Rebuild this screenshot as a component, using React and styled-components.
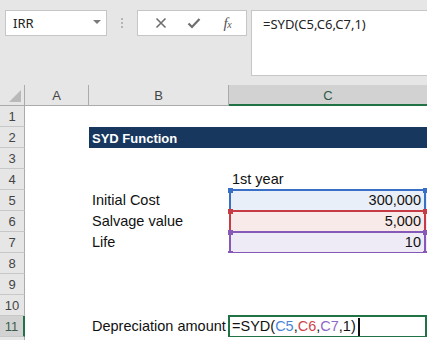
import React from "react";
import styled, { createGlobalStyle, css } from "styled-components";

const Global = createGlobalStyle`
  html, body { margin: 0; padding: 0; background: #fff; overflow: hidden; }
  * { box-sizing: border-box; }
`;

const UI = `"Noto Sans", "Open Sans", "Liberation Sans", sans-serif`;
const CELL = `"Liberation Sans", Arial, sans-serif`;

const Page = styled.div`
  width: 427px;
  height: 340px;
  overflow: hidden;
  font-family: ${CELL};
`;

const Toolbar = styled.div`
  height: 85px;
  background: #e6e6e6;
  display: flex;
  align-items: flex-start;
  padding: 10px 0 0 5px;
`;

const NameBox = styled.div`
  width: 102px;
  height: 26px;
  background: #fff;
  border: 1px solid #c6c6c6;
  display: flex;
  align-items: center;
  justify-content: space-between;
  padding: 0 5px 0 7px;
  font-family: ${UI};
  font-size: 13px;
  color: #222;
`;

const Caret = styled.span`
  width: 0;
  height: 0;
  border-left: 4px solid transparent;
  border-right: 4px solid transparent;
  border-top: 4px solid #7a7a7a;
  margin-top: -2px;
`;

const DotsWrap = styled.div`
  width: 30px;
  height: 26px;
  display: flex;
  flex-direction: column;
  align-items: center;
  justify-content: center;
  gap: 2px;
`;

const Dot = styled.span`
  width: 2px;
  height: 2px;
  background: #b5b5b5;
`;

const FxButtons = styled.div`
  width: 110px;
  height: 26px;
  background: #fff;
  border: 1px solid #c6c6c6;
  display: flex;
  align-items: center;
  justify-content: space-around;
  padding: 0 2px 0 6px;
`;

const IconBtn = styled.span`
  width: 24px;
  display: flex;
  justify-content: center;
  align-items: center;
  color: #707070;
`;

const FxText = styled.span`
  font-family: "Liberation Serif", "DejaVu Serif", serif;
  font-style: italic;
  font-size: 15px;
  color: #555;
  letter-spacing: -0.5px;
  & sub {
    font-size: 10px;
    vertical-align: baseline;
  }
`;

const FormulaBar = styled.div`
  flex: 1;
  margin-left: 4px;
  height: 66px;
  background: #fff;
  border: 1px solid #c6c6c6;
  border-right: none;
  padding: 4px 0 0 11px;
  font-family: ${UI};
  font-size: 13px;
  color: #222;
`;

const Sheet = styled.div`
  display: grid;
  grid-template-columns: 25px 64px 140px 198px;
  grid-template-rows: 21px repeat(12, 21px);
`;

const Corner = styled.div`
  background: #e6e6e6;
  border-right: 1px solid #ababab;
  border-bottom: 1px solid #ababab;
  position: relative;
  &::after {
    content: "";
    position: absolute;
    right: 3px;
    bottom: 3px;
    width: 0;
    height: 0;
    border-left: 12px solid transparent;
    border-bottom: 12px solid #b9b9b9;
  }
`;

const ColHead = styled.div`
  background: ${(p) => (p.$active ? "#d2d2d2" : "#e6e6e6")};
  border-right: 1px solid #ababab;
  border-bottom: ${(p) => (p.$active ? "2px solid #217346" : "1px solid #ababab")};
  display: flex;
  align-items: center;
  justify-content: center;
  font-family: ${CELL};
  font-size: 13px;
  color: ${(p) => (p.$active ? "#2e5b47" : "#444")};
  padding-top: 1px;
  ${(p) => p.$active && css`border-right: none;`}
`;

const RowHead = styled.div`
  background: ${(p) => (p.$active ? "#d2d2d2" : "#e6e6e6")};
  border-right: ${(p) => (p.$active ? "2px solid #217346" : "1px solid #ababab")};
  border-bottom: 1px solid #c8c8c8;
  display: flex;
  align-items: center;
  justify-content: center;
  font-family: ${CELL};
  font-size: 13px;
  color: ${(p) => (p.$active ? "#3d5c4e" : "#444")};
  padding-top: 1px;
`;

const Cell = styled.div`
  position: relative;
  background: ${(p) => p.$bg || "#fff"};
  display: flex;
  align-items: flex-end;
  justify-content: ${(p) => (p.$right ? "flex-end" : "flex-start")};
  padding: 0 ${(p) => (p.$right ? "6px" : "3px")} 2px 3px;
  font-family: ${CELL};
  font-size: 14.5px;
  line-height: 17px;
  color: #111;
  white-space: nowrap;
  overflow: ${(p) => (p.$clip ? "hidden" : "visible")};
`;

const TitleCell = styled(Cell)`
  background: #17375e;
  color: #fff;
  font-weight: bold;
  font-size: 13px;
  align-items: center;
  padding-bottom: 0;
  padding-top: 1px;
`;

const RefBox = styled.div`
  position: absolute;
  top: -1px;
  left: 0;
  right: 1px;
  bottom: -1px;
  border: 2px solid ${(p) => p.$color};
  pointer-events: none;
`;

const Handle = styled.span`
  position: absolute;
  width: 5px;
  height: 5px;
  background: ${(p) => p.$color};
  ${(p) => (p.$top ? "top: -3.5px;" : "bottom: -3.5px;")}
  ${(p) => (p.$left ? "left: -3.5px;" : "right: -3.5px;")}
`;

const EditBox = styled.div`
  position: absolute;
  top: -1px;
  left: -1px;
  right: 0;
  bottom: -1px;
  border: 2px solid #217346;
  pointer-events: none;
`;

const Tok = styled.span`
  color: ${(p) => p.$c || "#111"};
`;

const Cursor = styled.span`
  display: inline-block;
  width: 2px;
  height: 18px;
  background: #111;
  margin-left: 2px;
  margin-bottom: -1px;
`;

function Ref({ color }) {
  return (
    <RefBox $color={color}>
      <Handle $color={color} $top $left />
      <Handle $color={color} $top />
      <Handle $color={color} $left />
      <Handle $color={color} />
    </RefBox>
  );
}

const BLUE = "#3a6fc6";
const RED = "#c63b45";
const PURPLE = "#8659b9";

export default function App() {
  const rows = [];
  const data = {
    2: { title: "SYD Function" },
    4: { c: "1st year" },
    5: { b: "Initial Cost", c: "300,000", bg: "#e9eff9", ref: BLUE },
    6: { b: "Salvage value", c: "5,000", bg: "#f9eaea", ref: RED },
    7: { b: "Life", c: "10", bg: "#efebf6", ref: PURPLE },
    11: { b: "Depreciation amount", edit: true },
  };
  for (let r = 1; r <= 12; r++) {
    const d = data[r] || {};
    rows.push(
      <RowHead key={`h${r}`} $active={r === 11}>
        {r <= 11 ? r : ""}
      </RowHead>
    );
    rows.push(<Cell key={`a${r}`} />);
    if (d.title) {
      rows.push(<TitleCell key={`b${r}`}>{d.title}</TitleCell>);
      rows.push(<TitleCell key={`c${r}`} />);
      continue;
    }
    rows.push(
      <Cell key={`b${r}`} $clip>
        {d.b}
      </Cell>
    );
    if (d.edit) {
      rows.push(
        <Cell key={`c${r}`}>
          <span>
            <Tok>=SYD(</Tok>
            <Tok $c="#4a86d6">C5</Tok>
            <Tok>,</Tok>
            <Tok $c="#d1434e">C6</Tok>
            <Tok>,</Tok>
            <Tok $c="#8e68c6">C7</Tok>
            <Tok>,1)</Tok>
          </span>
          <Cursor />
          <EditBox />
        </Cell>
      );
    } else {
      rows.push(
        <Cell key={`c${r}`} $bg={d.bg} $right={!!d.ref}>
          {d.c}
          {d.ref && <Ref color={d.ref} />}
        </Cell>
      );
    }
  }

  return (
    <>
      <Global />
      <Page>
        <Toolbar>
          <NameBox>
            IRR
            <Caret />
          </NameBox>
          <DotsWrap>
            <Dot />
            <Dot />
            <Dot />
          </DotsWrap>
          <FxButtons>
            <IconBtn>
              <svg width="12" height="12" viewBox="0 0 12 12">
                <path d="M1.5 1.5 L10.5 10.5 M10.5 1.5 L1.5 10.5" stroke="#6e6e6e" strokeWidth="1.6" fill="none" />
              </svg>
            </IconBtn>
            <IconBtn>
              <svg width="14" height="12" viewBox="0 0 14 12">
                <path d="M1.5 6.5 L5 10 L12.5 2" stroke="#6e6e6e" strokeWidth="2.2" fill="none" />
              </svg>
            </IconBtn>
            <IconBtn>
              <FxText>
                f<sub>x</sub>
              </FxText>
            </IconBtn>
          </FxButtons>
          <FormulaBar>=SYD(C5,C6,C7,1)</FormulaBar>
        </Toolbar>
        <Sheet>
          <Corner />
          <ColHead>A</ColHead>
          <ColHead>B</ColHead>
          <ColHead $active>C</ColHead>
          {rows}
        </Sheet>
      </Page>
    </>
  );
}
